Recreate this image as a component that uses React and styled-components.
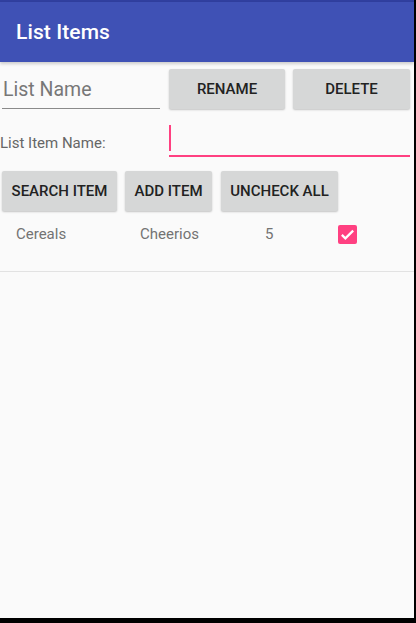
import React from "react";
import styled, { createGlobalStyle } from "styled-components";

const Global = createGlobalStyle`
  html, body { margin: 0; padding: 0; background: #000; }
  body { font-family: Roboto, "Noto Sans", sans-serif; }
  * { box-sizing: border-box; }
`;

const Screen = styled.div`
  width: 414px;
  height: 618px;
  background: #fafafa;
  display: flex;
  flex-direction: column;
  overflow: hidden;
`;

const StatusStrip = styled.div`
  height: 2px;
  background: #303f9f;
`;

const AppBar = styled.header`
  height: 60px;
  background: #3f51b5;
  display: flex;
  align-items: center;
  padding-left: 16px;
  box-shadow: 0 2px 3px rgba(0, 0, 0, 0.18);
  position: relative;
  z-index: 1;
`;

const Title = styled.h1`
  margin: 0;
  margin-top: -1px;
  font-size: 21px;
  font-weight: 500;
  color: #fff;
  letter-spacing: 0.1px;
`;

const Row = styled.div`
  display: flex;
  align-items: ${(p) => p.$align || "center"};
  gap: ${(p) => p.$gap ?? 8}px;
  padding: ${(p) => p.$pad || "0"};
`;

const NameField = styled.div`
  width: 158px;
  margin-left: 2px;
  height: 39px;
  border-bottom: 1px solid #8a8a8a;
  display: flex;
  align-items: flex-end;
  padding: 0 0 7px 1px;
  margin-right: 1px;
  font-size: 19.5px;
  color: #777;
`;

const Button = styled.button`
  width: ${(p) => p.$w}px;
  height: 40px;
  margin-left: ${(p) => p.$ml || 0}px;
  border: none;
  border-radius: 2px;
  background: #d6d7d7;
  box-shadow: 0 1px 2px rgba(0, 0, 0, 0.22);
  font-family: Roboto, sans-serif;
  font-weight: 500;
  font-size: 15px;
  color: #222;
  text-transform: uppercase;
  padding: 0;
  display: flex;
  align-items: center;
  justify-content: center;
`;

const Label = styled.span`
  width: 169px;
  flex-shrink: 0;
  font-size: 15px;
  color: #666;
  padding-top: 4px;
`;

const EditField = styled.div`
  width: 241px;
  height: 32px;
  border-bottom: 2px solid #ff4081;
  display: flex;
  align-items: flex-start;
`;

const Cursor = styled.span`
  width: 2px;
  height: 26px;
  background: #ff4081;
`;

const ListRow = styled.div`
  display: flex;
  align-items: center;
  height: 61px;
  padding-bottom: 14px;
  border-bottom: 1px solid #e2e2e2;
`;

const Cell = styled.span`
  width: ${(p) => p.$w}px;
  padding-left: ${(p) => p.$pl || 0}px;
  font-size: 15px;
  color: #737373;
`;

const Check = styled.span`
  width: 19px;
  height: 19px;
  border-radius: 2px;
  background: #ff4081;
  display: flex;
  align-items: center;
  justify-content: center;
`;

export default function App() {
  return (
    <>
      <Global />
      <Screen>
        <StatusStrip />
        <AppBar>
          <Title>List Items</Title>
        </AppBar>
        <Row $pad="7px 0 0 0" $gap={8}>
          <NameField>List Name</NameField>
          <Button $w={116}>Rename</Button>
          <Button $w={117}>Delete</Button>
        </Row>
        <Row $pad="16px 0 0 0" $gap={0}>
          <Label>List Item Name:</Label>
          <EditField>
            <Cursor />
          </EditField>
        </Row>
        <Row $pad="14px 0 0 2px" $gap={8}>
          <Button $w={115}>Search Item</Button>
          <Button $w={87}>Add Item</Button>
          <Button $w={117} $ml={1}>Uncheck All</Button>
        </Row>
        <ListRow>
          <Cell $w={140} $pl={16}>Cereals</Cell>
          <Cell $w={125}>Cheerios</Cell>
          <Cell $w={73}>5</Cell>
          <Check>
            <svg width="17" height="17" viewBox="0 0 24 24">
              <path d="M4 12.5l5 5L20 6.5" fill="none" stroke="#fff" strokeWidth="3.2" />
            </svg>
          </Check>
        </ListRow>
      </Screen>
    </>
  );
}
